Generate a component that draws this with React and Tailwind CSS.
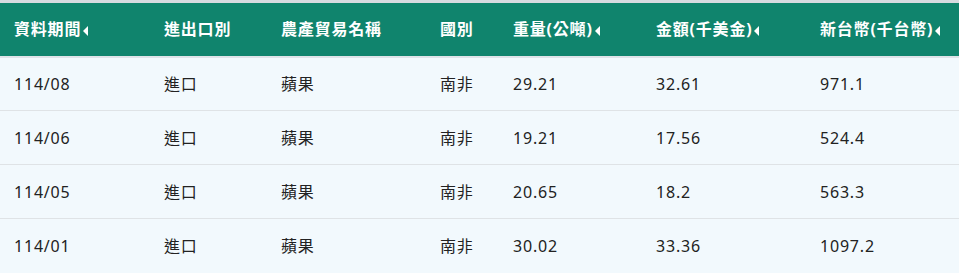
const COLS = [
  { label: "資料期間", sort: true, w: "w-[150px]" },
  { label: "進出口別", w: "w-[117px]" },
  { label: "農產貿易名稱", w: "w-[159px]" },
  { label: "國別", w: "w-[73px]" },
  { label: "重量(公噸)", sort: true, w: "w-[143px]" },
  { label: "金額(千美金)", sort: true, w: "w-[164px]" },
  { label: "新台幣(千台幣)", sort: true, w: "w-[153px]" },
];

const ROWS = [
  ["114/08", "進口", "蘋果", "南非", "29.21", "32.61", "971.1"],
  ["114/06", "進口", "蘋果", "南非", "19.21", "17.56", "524.4"],
  ["114/05", "進口", "蘋果", "南非", "20.65", "18.2", "563.3"],
  ["114/01", "進口", "蘋果", "南非", "30.02", "33.36", "1097.2"],
];

function Caret() {
  return (
    <svg width="5" height="10" viewBox="0 0 5 10" className="ml-[2px] inline-block align-middle">
      <path d="M5 0 L0 5 L5 10 Z" fill="#fff" />
    </svg>
  );
}

export default function App() {
  return (
    <div className="w-[959px] bg-white font-['Noto_Sans','Noto_Sans_CJK_TC',sans-serif] tracking-[0.05em]">
      <table className="w-full table-fixed border-collapse border-t-[3px] border-[#d7dbe0] text-left">
        <thead className="bg-[#10846d] text-[16px] text-white">
          <tr className="border-b-2 border-[#dfe3e8]">
            {COLS.map((c) => (
              <th key={c.label} className={`${c.w} h-[55px] px-[14px] font-bold whitespace-nowrap`}>
                {c.label}
                {c.sort && <Caret />}
              </th>
            ))}
          </tr>
        </thead>
        <tbody className="bg-[#f2f9fd] text-[16px] text-[#222]">
          {ROWS.map((r, i) => (
            <tr key={i} className="border-b border-[#dfe3e6] last:border-b-0">
              {r.map((v, j) => (
                <td key={j} className="h-[54px] px-[14px] whitespace-nowrap">
                  {v}
                </td>
              ))}
            </tr>
          ))}
        </tbody>
      </table>
    </div>
  );
}
